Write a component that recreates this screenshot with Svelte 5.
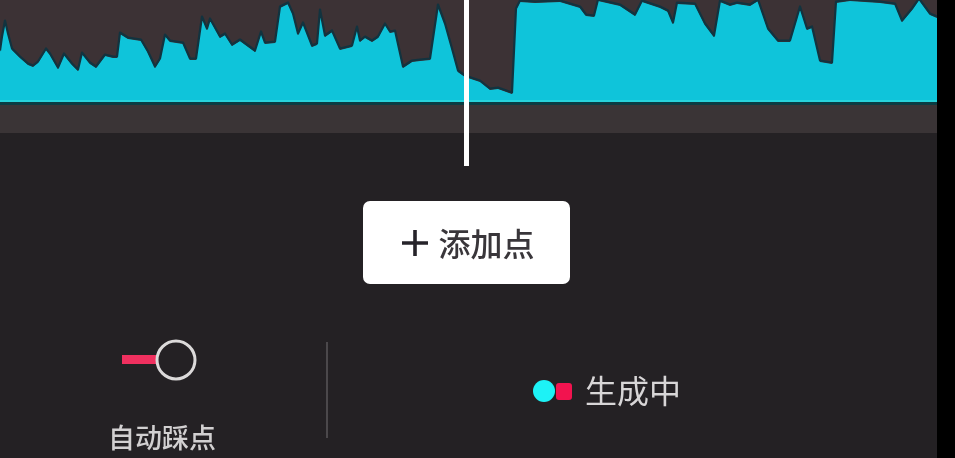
<script>
    // waveform outline, traced left to right
    const peaks = [
        [0,52],[2,38],[5,22],[8,35],[12,50],[20,58],[28,65],[33,67],[38,63],[46,50],[50,55],[58,69],[64,55],[72,65],[78,71],[82,54],[90,64],[96,68],[105,56],[113,58],[117,58],[120,34],[128,39],[141,41],[148,53],[155,68],[160,60],[165,36],[170,42],[183,44],[190,60],[196,60],[202,18],[207,30],[210,20],[220,38],[225,35],[232,46],[240,41],[255,52],[261,33],[265,44],[275,43],[280,8],[288,4],[293,15],[298,35],[303,24],[312,47],[317,45],[320,11],
        [325,37],[332,32],[340,50],[352,47],[357,28],[360,42],[365,38],[372,42],[378,38],[385,25],[390,33],[395,32],[403,68],[412,62],[420,61],[430,60],[438,6],[445,25],[452,50],[458,72],[465,77],[480,82],[490,90],[498,89],[512,94],[516,10],[520,2],[535,3],[560,2],[580,8],[586,16],[594,17],[598,1],[620,6],[635,16],
        [642,2],[660,8],[668,12],[673,24],[677,4],[695,5],[705,25],[714,37],[720,2],[730,6],[737,4],[750,6],[758,1],[768,30],[778,42],[790,42],[800,8],[807,30],[812,28],[820,62],[832,64],[836,3],[850,1],[880,3],[895,5],[902,22],[912,10],[919,0],[930,15],[937,18]
    ];
    const outline = peaks.map(p => p.join(',')).join(' ');
    const area = `0,102 ${outline} 937,102`;
</script>

<main class="screen">
    <div class="timeline">
        <svg class="wave" viewBox="0 0 937 105" width="937" height="105">
            <polygon points={area} fill="#0fc4da" />
            <polyline points={outline} fill="none" stroke="#12333f" stroke-width="2.2" stroke-linejoin="round" transform="translate(0,-1.5)" />
            <rect x="0" y="100" width="937" height="2" fill="#27d3dc" />
            <rect x="0" y="102" width="937" height="3" fill="#0b3c42" />
        </svg>
        <div class="strip"></div>
        <div class="playhead"></div>
    </div>

    <div class="add-wrap">
        <button class="add">
            <svg viewBox="0 0 28 28" width="28" height="28">
                <path d="M1 14H27M14 1V27" stroke="#26232a" stroke-width="3.6" fill="none" />
            </svg>
            <span>添加点</span>
        </button>
    </div>

    <div class="tools">
        <div class="tool">
            <svg class="toggle" viewBox="0 0 76 44" width="76" height="44">
                <rect x="0" y="17" width="36" height="9" fill="#f0305f" />
                <circle cx="54" cy="22" r="19" fill="#242124" stroke="#dcdada" stroke-width="3" />
            </svg>
            <span class="label">自动踩点</span>
        </div>
        <div class="divider"></div>
        <div class="status">
            <span class="dots">
                <i class="dot"></i>
                <i class="sq"></i>
            </span>
            <span class="gen">生成中</span>
        </div>
    </div>
</main>

<style>
    :global(body) {
        background: #000;
    }

    .screen {
        width: 937px;
        height: 458px;
        overflow: hidden;
        background: #242124;
        font-family: "Noto Sans CJK SC", "Noto Sans", sans-serif;
        filter: blur(0.7px);
    }

    .timeline {
        position: relative;
        background: #3c3235;
    }

    .wave {
        display: block;
    }

    .strip {
        height: 28px;
        background: #3a3436;
    }

    .playhead {
        position: absolute;
        left: 464px;
        top: 0;
        width: 5px;
        height: 166px;
        background: #fff;
    }

    .add-wrap {
        display: flex;
        justify-content: center;
        padding: 68px 4px 0 0;
    }

    .add {
        display: flex;
        align-items: center;
        justify-content: center;
        gap: 9px;
        width: 207px;
        height: 83px;
        padding: 0 0 0 3px;
        border: 0;
        border-radius: 7px;
        background: #fff;
        color: #39363a;
        font-family: inherit;
        font-size: 32px;
        font-weight: 500;
    }

    .add span {
        margin-bottom: 2px;
    }

    .tools {
        display: flex;
        align-items: flex-start;
        padding-top: 58px;
    }

    .tool {
        display: flex;
        flex-direction: column;
        align-items: center;
        width: 324px;
        padding-right: 2px;
        margin-top: -4px;
        gap: 40px;
    }

    .toggle {
        margin-right: 5px;
    }

    .label {
        color: #d2d0d1;
        font-size: 27px;
        line-height: 30px;
        font-weight: 500;
    }

    .divider {
        width: 2px;
        height: 96px;
        background: #4b484b;
    }

    .status {
        display: flex;
        align-items: center;
        gap: 13px;
        margin: 25px 0 0 205px;
    }

    .dots {
        display: flex;
        align-items: center;
    }

    .dot {
        width: 22px;
        height: 22px;
        border-radius: 50%;
        background: #1df2f6;
    }

    .sq {
        width: 16px;
        height: 17px;
        margin-left: 1px;
        border-radius: 3px;
        background: #f2134f;
    }

    .gen {
        margin-bottom: 4px;
        color: #d8d6d7;
        font-size: 32px;
        line-height: 44px;
    }
</style>
